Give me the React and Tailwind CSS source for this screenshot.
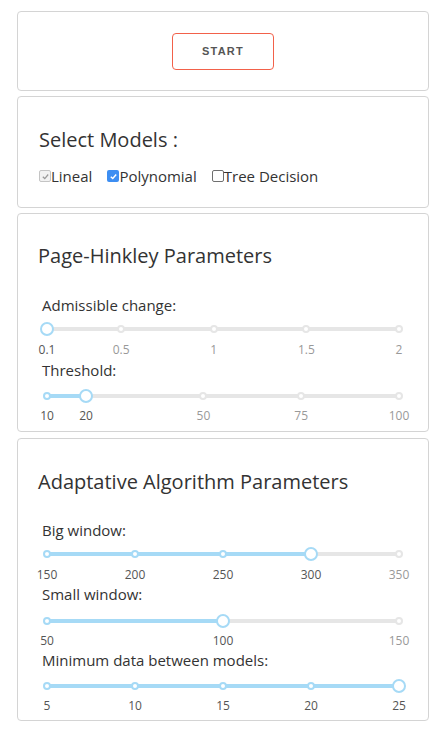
import React from 'react';

function Check({ state }) {
  // state: 'disabled' | 'checked' | 'empty'
  if (state === 'checked') {
    return (
      <span className="inline-flex h-[12px] w-[12px] items-center justify-center rounded-[2px] bg-[#3d8ef2]">
        <svg width="9" height="9" viewBox="0 0 10 10">
          <path d="M2 5.2 L4.2 7.3 L8 2.8" fill="none" stroke="#fff" strokeWidth="1.6" />
        </svg>
      </span>
    );
  }
  if (state === 'disabled') {
    return (
      <span className="inline-flex h-[12px] w-[12px] items-center justify-center rounded-[2px] border border-[#c4c4c4] bg-[#f2f2f2]">
        <svg width="9" height="9" viewBox="0 0 10 10">
          <path d="M2 5.2 L4.2 7.3 L8 2.8" fill="none" stroke="#9a9a9a" strokeWidth="1.4" />
        </svg>
      </span>
    );
  }
  return <span className="inline-block h-[12px] w-[12px] rounded-[2px] border border-[#6f6f6f] bg-white" />;
}

function Slider({ ticks, value, min, max, track = 'mt-[3px]', labels = 'mt-[3px]', fill }) {
  const pos = v => ((v - min) / (max - min)) * 100;
  const vp = pos(value);
  return (
    <div className="mx-[9px]">
      <div className={`relative h-[20px] ${track}`}>
        <div className="absolute left-0 right-0 top-[8px] h-[4px] rounded-full bg-[#e6e6e6]" />
        {fill && (
          <div
            className="absolute left-0 top-[8px] h-[4px] rounded-full bg-[#a6daf6]"
            style={{ width: vp + '%' }}
          />
        )}
        {ticks.map(t => {
          const on = fill && t <= value;
          if (t === value) return null;
          return (
            <span
              key={t}
              className={`absolute top-[6px] h-[8px] w-[8px] -translate-x-1/2 rounded-full border-2 bg-white ${on ? 'border-[#a6daf6]' : 'border-[#e6e6e6]'}`}
              style={{ left: pos(t) + '%' }}
            />
          );
        })}
        <span
          className="absolute top-[3px] h-[14px] w-[14px] -translate-x-1/2 rounded-full border-2 border-[#a6daf6] bg-white"
          style={{ left: vp + '%' }}
        />
      </div>
      <div className={`relative h-[16px] ${labels}`}>
        {ticks.map(t => (
          <span
            key={t}
            className={`absolute top-0 -translate-x-1/2 text-[12px] leading-[16px] ${t <= value ? 'text-[#555]' : 'text-[#999]'}`}
            style={{ left: pos(t) + '%' }}
          >
            {t}
          </span>
        ))}
      </div>
    </div>
  );
}

function Label({ children, className = '' }) {
  return <div className={`ml-[4px] h-[22px] text-[15px] leading-[22px] text-[#333] ${className}`}>{children}</div>;
}

export default function App() {
  return (
    <div className="min-h-screen bg-white font-['Open_Sans',sans-serif] text-[#333]">
      <div className="ml-[17px] mr-[15px] flex flex-col gap-[5px] pt-[11px]">
        {/* Start */}
        <div className="flex h-[80px] items-center justify-center rounded-[4px] border border-[#d4d4d4]">
          <button className="h-[37px] w-[102px] rounded-[4px] border border-[#f2614a] bg-white font-['Liberation_Sans',Arial,sans-serif] text-[11px] font-bold tracking-[1.2px] text-[#555]">
            START
          </button>
        </div>

        {/* Models */}
        <div className="rounded-[4px] border border-[#d4d4d4] pb-[21px] pl-[21px] pr-[20px] pt-[29px]">
          <h2 className="h-[28px] text-[20px] leading-[28px]">Select Models :</h2>
          <div className="mt-[12px] flex h-[20px] items-center text-[15px] leading-[20px]">
            <label className="flex items-center">
              <Check state="disabled" />
              <span>Lineal</span>
            </label>
            <label className="ml-[15px] flex items-center">
              <Check state="checked" />
              <span>Polynomial</span>
            </label>
            <label className="ml-[15px] flex items-center">
              <Check state="empty" />
              <span>Tree Decision</span>
            </label>
          </div>
        </div>

        {/* Page-Hinkley */}
        <div className="rounded-[4px] border border-[#d4d4d4] px-[20px] pb-[7px] pt-[28px]">
          <h2 className="h-[28px] text-[20px] leading-[28px]">Page-Hinkley Parameters</h2>
          <Label className="mt-[24px]">Admissible change:</Label>
          <Slider ticks={[0.1, 0.5, 1, 1.5, 2]} value={0.1} min={0.1} max={2} fill={false} />
          <Label className="mt-[1px]">Threshold:</Label>
          <Slider ticks={[10, 20, 50, 75, 100]} value={20} min={10} max={100} fill track="mt-[5px]" labels="mt-[2px]" />
        </div>

        {/* Adaptative */}
        <div className="mt-[1px] rounded-[4px] border border-[#d4d4d4] px-[20px] pb-[6px] pt-[29px]">
          <h2 className="h-[28px] text-[20px] leading-[28px]">Adaptative Algorithm Parameters</h2>
          <Label className="mt-[23px]">Big window:</Label>
          <Slider ticks={[150, 200, 250, 300, 350]} value={300} min={150} max={350} fill />
          <Label>Small window:</Label>
          <Slider ticks={[50, 100, 150]} value={100} min={50} max={150} fill track="mt-[6px]" labels="mt-[2px]" />
          <Label>Minimum data between models:</Label>
          <Slider ticks={[5, 10, 15, 20, 25]} value={25} min={5} max={25} fill track="mt-[5px]" labels="mt-[2px]" />
        </div>
      </div>
    </div>
  );
}
